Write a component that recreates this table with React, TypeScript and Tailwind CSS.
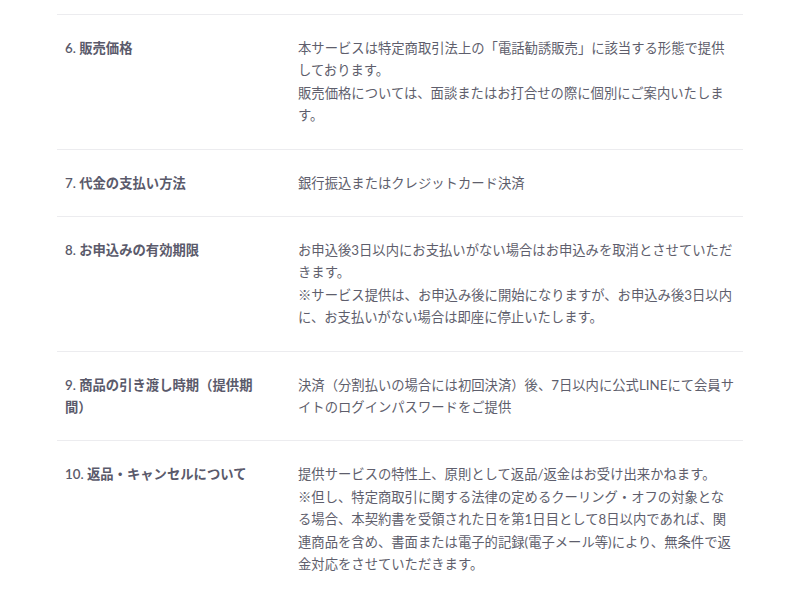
import React from "react";

type Row = { label: string[]; body: string[] };

const rows: Row[] = [
  {
    label: ["6. 販売価格"],
    body: [
      "本サービスは特定商取引法上の「電話勧誘販売」に該当する形態で提供",
      "しております。",
      "販売価格については、面談またはお打合せの際に個別にご案内いたしま",
      "す。",
    ],
  },
  {
    label: ["7. 代金の支払い方法"],
    body: ["銀行振込またはクレジットカード決済"],
  },
  {
    label: ["8. お申込みの有効期限"],
    body: [
      "お申込後3日以内にお支払いがない場合はお申込みを取消とさせていただ",
      "きます。",
      "※サービス提供は、お申込み後に開始になりますが、お申込み後3日以内",
      "に、お支払いがない場合は即座に停止いたします。",
    ],
  },
  {
    label: ["9. 商品の引き渡し時期（提供期", "間）"],
    body: [
      "決済（分割払いの場合には初回決済）後、7日以内に公式LINEにて会員サ",
      "イトのログインパスワードをご提供",
    ],
  },
  {
    label: ["10. 返品・キャンセルについて"],
    body: [
      "提供サービスの特性上、原則として返品/返金はお受け出来かねます。",
      "※但し、特定商取引に関する法律の定めるクーリング・オフの対象とな",
      "る場合、本契約書を受領された日を第1日目として8日以内であれば、関",
      "連商品を含め、書面または電子的記録(電子メール等)により、無条件で返",
      "金対応をさせていただきます。",
    ],
  },
];

export default function App() {
  return (
    <div
      className="w-[800px] h-[590px] overflow-hidden bg-white"
      style={{ fontFamily: '"Lato", "Noto Sans CJK JP", sans-serif' }}
    >
      <div className="mx-[57px] pt-[14px]">
        {rows.map((r, i) => (
          <div
            key={i}
            className="grid grid-cols-[233px_1fr] border-t border-[#ececef] px-2 py-[22px] text-[13.33px] leading-[22.4px]"
          >
            <div className="font-semibold text-[#5a5a6b]">
              {r.label.map((l, j) => (
                <span key={j} className="block whitespace-nowrap">
                  {l}
                </span>
              ))}
            </div>
            <div className="text-[#5e5e6c]">
              {r.body.map((l, j) => (
                <span key={j} className="block whitespace-nowrap">
                  {l}
                </span>
              ))}
            </div>
          </div>
        ))}
      </div>
    </div>
  );
}
